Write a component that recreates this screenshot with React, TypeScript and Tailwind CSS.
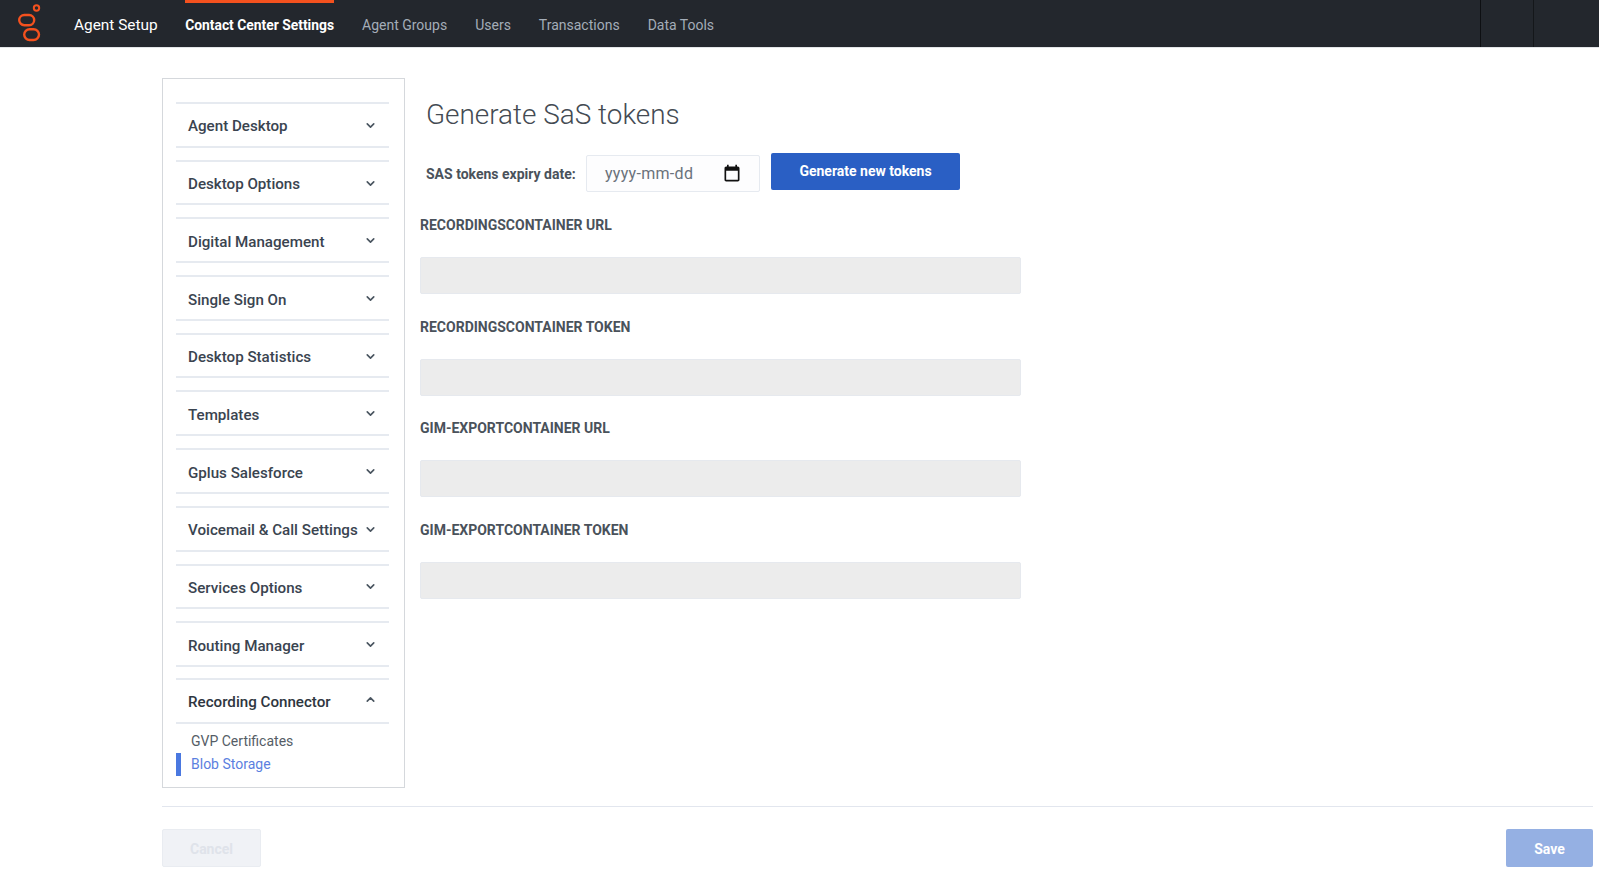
import { ChevronDown, ChevronUp } from "lucide-react";

const menu = [
  "Agent Desktop",
  "Desktop Options",
  "Digital Management",
  "Single Sign On",
  "Desktop Statistics",
  "Templates",
  "Gplus Salesforce",
  "Voicemail & Call Settings",
  "Services Options",
  "Routing Manager",
];

const fields = [
  "RECORDINGSCONTAINER URL",
  "RECORDINGSCONTAINER TOKEN",
  "GIM-EXPORTCONTAINER URL",
  "GIM-EXPORTCONTAINER TOKEN",
];

const Logo = () => (
  <svg width="26" height="38" viewBox="0 0 26 38" fill="none" stroke="#f4511e" strokeWidth="2.4">
    <rect x="2.2" y="11" width="15" height="10.2" rx="5.1" />
    <rect x="7.2" y="25.2" width="14.8" height="10.8" rx="5.4" />
    <circle cx="19.5" cy="4" r="2.7" strokeWidth="2" />
  </svg>
);

const CalendarIcon = () => (
  <svg width="20" height="20" viewBox="0 0 24 24" fill="#111">
    <path d="M19 3h-1V1h-2v2H8V1H6v2H5c-1.11 0-1.99.9-1.99 2L3 19c0 1.1.89 2 2 2h14c1.1 0 2-.9 2-2V5c0-1.1-.9-2-2-2zm0 16H5V8h14v11z" />
  </svg>
);

export default function App() {
  return (
    <div className="h-[878px] overflow-hidden bg-white font-['Roboto',sans-serif]">
      {/* top bar */}
      <header className="flex h-[48px] items-stretch border-b border-[#e3e5e8] bg-[#23272d]">
        <div className="ml-[17px] flex w-[57px] items-start pt-[4px]">
          <Logo />
        </div>
        <div className="flex items-center pt-[5px] text-[15.4px] text-white">Agent Setup</div>
        <nav className="ml-[27.5px] flex gap-[28px] text-[14px] text-[#a3adb8]">
          <a className="flex items-center border-t-[3px] border-[#f4511e] text-[13.85px] font-bold text-white">
            Contact Center Settings
          </a>
          <a className="flex items-center border-t-[3px] border-transparent">Agent Groups</a>
          <a className="flex items-center border-t-[3px] border-transparent">Users</a>
          <a className="flex items-center border-t-[3px] border-transparent">Transactions</a>
          <a className="flex items-center border-t-[3px] border-transparent">Data Tools</a>
        </nav>
        <div className="ml-auto flex">
          <div className="w-[53px] border-l-[1.5px] border-[#0d0f12]" />
          <div className="w-[66px] border-l-[1.5px] border-[#14171a]" />
        </div>
      </header>

      <main className="pl-[162px] pr-[6px] pt-[30px]">
        <div className="flex items-start">
          {/* left menu */}
          <aside className="h-[710px] w-[243px] shrink-0 border border-[#d5d8dc] pl-[13px] pr-[15px] pt-[23px]">
            {menu.map((name) => (
              <div
                key={name}
                className="mb-[12px] flex h-[45.7px] items-center justify-between border-y-2 border-[#e6eaf0] pl-[12px] pr-[12px] pt-[4px] text-[15.15px] font-medium text-[#3a4450]"
              >
                <span>{name}</span>
                <ChevronDown size={13} strokeWidth={3} className="-mt-[3px] text-[#4a5560]" />
              </div>
            ))}
            <div className="-mt-[1px] flex h-[45.7px] items-center justify-between border-y-2 border-[#e6eaf0] pl-[12px] pr-[12px] pt-[4px] text-[15.15px] font-medium text-[#2e3640]">
              <span>Recording Connector</span>
              <ChevronUp size={13} strokeWidth={3} className="-mt-[6px] text-[#4a5560]" />
            </div>
            <div className="mt-[6px] flex flex-col text-[14px]">
              <a className="flex h-[23px] items-center pl-[15px] text-[#555d66]">GVP Certificates</a>
              <a className="flex h-[23px] items-center border-l-[5px] border-[#4a78e0] pl-[10px] text-[#5b7fe0]">
                Blob Storage
              </a>
            </div>
          </aside>

          {/* form */}
          <section className="ml-[15px] w-[601px]">
            <h1 className="ml-[6px] mt-[19px] text-[27.9px] font-light leading-[36px] text-[#444b53]">
              Generate SaS tokens
            </h1>
            <div className="ml-[6px] mt-[22px] flex items-center">
              <label className="w-[160px] pt-[2px] text-[14px] font-bold text-[#4a525b]">SAS tokens expiry date:</label>
              <div className="flex h-[37px] w-[174px] items-center justify-between rounded-[2px] border border-[#e6eaf0] bg-[#fdfdfe] pl-[18px] pr-[17px] text-[16px] tracking-[0.3px] text-[#6a727b]">
                <span>yyyy-mm-dd</span>
                <CalendarIcon />
              </div>
              <button className="-mt-[5px] ml-[11px] h-[37px] w-[189px] rounded-[2px] bg-[#2a5fc4] text-[14px] font-bold text-white">
                Generate new tokens
              </button>
            </div>
            <div className="mt-[25px] flex flex-col gap-[24.7px]">
              {fields.map((label) => (
                <div key={label}>
                  <div className="mb-[23px] h-[17px] text-[14px] font-bold leading-[17px] text-[#4a525b]">
                    {label}
                  </div>
                  <div className="h-[37px] rounded-[2px] border border-[#e6e9ee] bg-[#ececec]" />
                </div>
              ))}
            </div>
          </section>
        </div>

        {/* footer actions */}
        <div className="mt-[18px] flex justify-between border-t border-[#e2e6ee] pt-[22px]">
          <button className="h-[38px] w-[99px] rounded-[2px] border border-[#e9ecf1] bg-[#f0f2f6] pt-[2px] text-[14px] font-bold text-[#dfe3ea]">
            Cancel
          </button>
          <button className="h-[38px] w-[87px] rounded-[2px] bg-[#95b0e3] pt-[2px] text-[14px] font-bold text-white">
            Save
          </button>
        </div>
      </main>
    </div>
  );
}
